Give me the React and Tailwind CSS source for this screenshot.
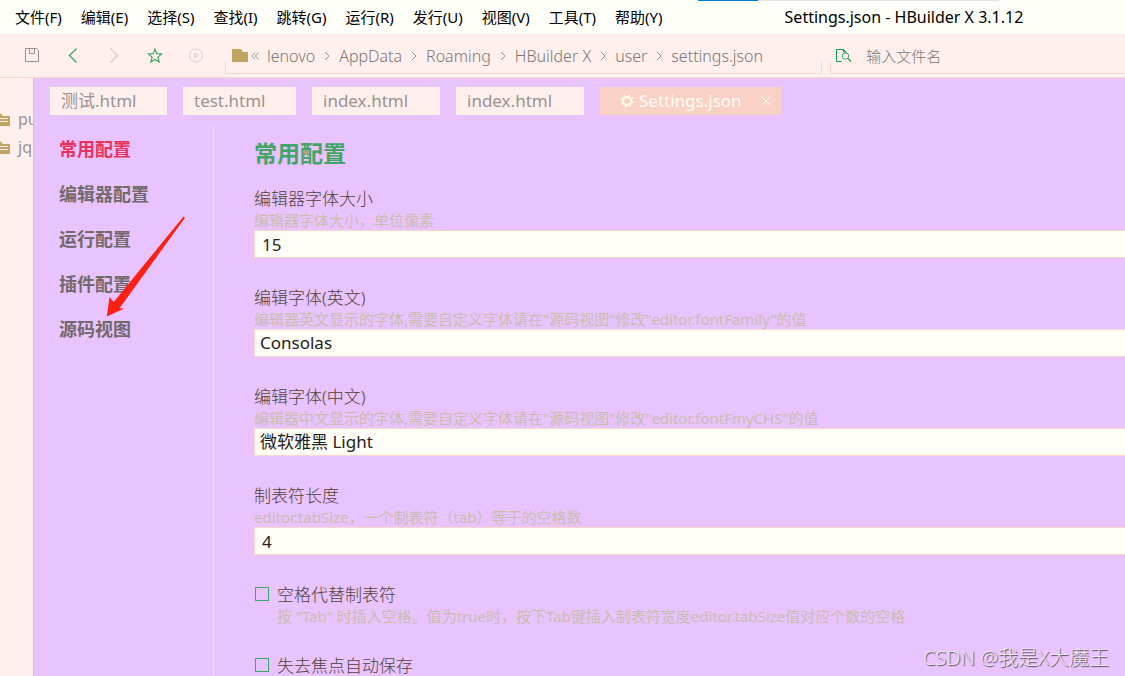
import React from "react";

const menus = ["文件(F)", "编辑(E)", "选择(S)", "查找(I)", "跳转(G)", "运行(R)", "发行(U)", "视图(V)", "工具(T)", "帮助(Y)"];
const crumbs = ["lenovo", "AppData", "Roaming", "HBuilder X", "user", "settings.json"];
const sections = ["常用配置", "编辑器配置", "运行配置", "插件配置", "源码视图"];
const files = [
  { name: "测试.html", width: "w-[117px]" },
  { name: "test.html", width: "w-[113px]" },
  { name: "index.html", width: "w-32" },
  { name: "index.html", width: "w-32" },
];
const fields = [
  { id: "size", label: "编辑器字体大小", hint: "编辑器字体大小，单位像素", value: "15" },
  { id: "latin", label: "编辑字体(英文)", hint: '编辑器英文显示的字体,需要自定义字体请在"源码视图"修改"editor.fontFamily"的值', value: "Consolas", select: true },
  { id: "chinese", label: "编辑字体(中文)", hint: '编辑器中文显示的字体,需要自定义字体请在"源码视图"修改"editor.fontFmyCHS"的值', value: "微软雅黑 Light", select: true },
  { id: "tab", label: "制表符长度", hint: "editor.tabSize，一个制表符（tab）等于的空格数", value: "4" },
];
const checks = [
  { id: "spaces", label: "空格代替制表符", hint: '按 "Tab" 时插入空格。值为true时，按下Tab键插入制表符宽度editor.tabSize值对应个数的空格' },
  { id: "autosave", label: "失去焦点自动保存", hint: "" },
];

function Chevron({ className }) {
  return (
    <svg className={className} width="6" height="10" viewBox="0 0 6 10" fill="none" stroke="currentColor" aria-hidden="true">
      <path d="M1 1l4 4-4 4" />
    </svg>
  );
}

function ToolButton({ label, className, children }) {
  return (
    <button type="button" aria-label={label} className={`flex h-6 w-[41px] items-center justify-center ${className}`}>
      <svg width="16" height="16" viewBox="0 0 16 16" fill="none" stroke="currentColor" aria-hidden="true">
        {children}
      </svg>
    </button>
  );
}

function Toolbar() {
  return (
    <div className="flex h-11 shrink-0 items-stretch border-b border-[#f8d5ca] bg-[#fff0ed] text-[#999391]">
      <div className="flex w-[225px] shrink-0 items-center pl-[11px]">
        <ToolButton label="保存" className="text-[#999391]">
          <path d="M1.500 .5h11l2 2v11h-13zM5.500 .5v5h5v-5" />
        </ToolButton>
        <ToolButton label="后退" className="text-[#3aa762]">
          <path d="M11.500 .5L4.500 7.500l7 7" strokeWidth="1.400" />
        </ToolButton>
        <ToolButton label="前进" className="text-[#d5cdca]">
          <path d="M4.500 .5l7 7-7 7" strokeWidth="1.400" />
        </ToolButton>
        <ToolButton label="收藏" className="text-[#3aa762]">
          <path d="M8 1l1.800 4.600 4.900 .3-3.800 3.200 1.200 4.900L8 11.400 3.900 14l1.200-4.900L1.300 5.900l4.900-.3z" strokeWidth="1.200" />
        </ToolButton>
        <ToolButton label="运行" className="text-[#d5cdca]">
          <circle cx="8" cy="7.500" r="6.500" />
          <path d="M6.500 5.200l3.700 2.300-3.700 2.300z" />
        </ToolButton>
      </div>
      <nav aria-label="路径" className="relative flex min-w-0 flex-[599] items-center pl-[7px]">
        <div className="pointer-events-none absolute inset-x-0 bottom-[3px] h-3 border-x border-b border-[#f8d5ca]" />
        <svg width="16" height="13" viewBox="0 0 16 13" fill="#c0a562" className="shrink-0" aria-hidden="true">
          <path d="M0 0h9l2 3h5v10H0z" />
        </svg>
        <svg width="8" height="8" viewBox="0 0 8 8" fill="none" stroke="currentColor" className="ml-[3px] mr-2 shrink-0" aria-hidden="true">
          <path d="M4 .5L.8 4 4 7.500M7.500 .5L4.300 4l3.200 3.500" />
        </svg>
        {crumbs.map((name, i) => (
          <React.Fragment key={name}>
            {i > 0 && <Chevron className="mx-[9px] shrink-0" />}
            <a href="#" className="whitespace-nowrap text-base font-light leading-6 text-[#7d7572]">{name}</a>
          </React.Fragment>
        ))}
      </nav>
      <div className="relative ml-2 flex flex-[293] items-center pl-1.5">
        <div className="pointer-events-none absolute inset-x-0 bottom-[3px] h-3 border-b border-l border-[#f8d5ca]" />
        <svg width="16" height="15" viewBox="0 0 16 15" fill="none" stroke="#16984b" className="shrink-0" aria-hidden="true">
          <path d="M5.500 13.500h-5v-12h7l2.500 2.500v1M7.500 1.500v2.500h2.500" />
          <circle cx="9.500" cy="8" r="3.200" stroke="#3aa762" />
          <path d="M11.800 10.300l3.400 3.400" stroke="#3aa762" strokeWidth="1.400" />
        </svg>
        <input aria-label="输入文件名" placeholder="输入文件名" className="ml-3.5 w-full min-w-0 bg-transparent text-[15px] font-light leading-6 outline-none placeholder:text-[#7d7572]" />
      </div>
    </div>
  );
}

function ProjectPanel() {
  return (
    <aside className="w-[34px] shrink-0 overflow-hidden border-r border-[#d8c4a8] bg-[#fff0ed] pt-[27px]">
      {["pu", "jq"].map((name) => (
        <div key={name} className="flex h-7 items-center text-base leading-6 text-[#999391]">
          <svg width="10" height="13" viewBox="0 0 10 13" className="mr-2 shrink-0" aria-hidden="true">
            <path d="M0 0l3 3h7v10H0z" fill="#c0a562" />
            <path d="M0 5.500h8M0 8.500h8" stroke="#fff0ed" />
          </svg>
          {name}
        </div>
      ))}
    </aside>
  );
}

function Tabs() {
  return (
    <div role="tablist" className="flex h-12 shrink-0 gap-4 pl-4 pt-[9px]">
      {files.map((f, i) => (
        <button key={i} type="button" role="tab" aria-selected="false" className={`h-7 ${f.width} shrink-0 border border-[#fff3e2] bg-[#fff0ed] pl-2.5 text-left text-[17px] leading-6 text-[#999391]`}>
          {f.name}
        </button>
      ))}
      <div className="flex h-7 w-[181px] shrink-0 items-center justify-between bg-[#f9d1c5] pl-5 pr-2.5 text-[#fffcf5]">
        <button type="button" role="tab" aria-selected="true" className="flex items-center gap-[5px] text-[17px] leading-6">
          <svg width="14" height="14" viewBox="0 0 14 14" fill="none" stroke="#fff8e4" aria-hidden="true">
            <circle cx="7" cy="7" r="4" strokeWidth="2.400" />
            <circle cx="7" cy="7" r="5.500" strokeWidth="1.800" strokeDasharray="2.160 2.160" />
          </svg>
          Settings.json
        </button>
        <button type="button" aria-label="关闭">
          <svg width="10" height="10" viewBox="0 0 10 10" fill="none" stroke="currentColor" aria-hidden="true">
            <path d="M1 1l8 8M9 1L1 9" />
          </svg>
        </button>
      </div>
    </div>
  );
}

const hintStyle = "h-5 whitespace-nowrap text-[15px] leading-5 text-[#c9bdad]";
const labelStyle = "block h-[22px] whitespace-nowrap text-[17px] font-light leading-[22px] text-[#4f4338]";
const boxStyle = "block h-7 w-full appearance-none rounded-none border border-r-0 border-[#fcd6cc] bg-[#fffdf6] text-[17px] leading-6 text-[#222] outline-none";

function Field({ field }) {
  return (
    <div>
      <label htmlFor={field.id} className={labelStyle}>{field.label}</label>
      <p className={hintStyle}>{field.hint}</p>
      {field.select ? (
        <select id={field.id} className={`${boxStyle} pl-[5px]`}>
          <option>{field.value}</option>
        </select>
      ) : (
        <input id={field.id} inputMode="numeric" defaultValue={field.value} className={`${boxStyle} pl-[7px]`} />
      )}
    </div>
  );
}

function CheckField({ field }) {
  return (
    <div className="flex gap-2">
      <input id={field.id} type="checkbox" className="ml-px mt-[3px] size-3.5 shrink-0 appearance-none border border-[#3aa762] checked:bg-[#3aa762]" />
      <div>
        <label htmlFor={field.id} className={labelStyle}>{field.label}</label>
        <p className={hintStyle}>{field.hint}</p>
      </div>
    </div>
  );
}

function Settings() {
  return (
    <div className="relative flex min-h-0 grow">
      <nav aria-label="配置分类" className="w-[180px] shrink-0 border-r border-[#f7dcec] pl-[25px]">
        {sections.map((name, i) => (
          <a key={name} href="#" className={`block h-[45px] text-lg font-bold leading-[46px] ${i === 0 ? "text-[#e8315b]" : "text-[#71696b]"}`}>
            {name}
          </a>
        ))}
      </nav>
      <svg width="80" height="102" viewBox="0 0 80 102" className="pointer-events-none absolute left-[72px] top-[90px]" aria-hidden="true">
        <path d="M77.500 .5L79 1.800 13.500 92.200l4.800 .3L.8 100.500 3.500 81l4.200 5z" fill="#ff2015" />
      </svg>
      <form className="flex min-w-0 grow flex-col gap-[29px] overflow-hidden pl-10">
        <h1 className="h-[33px] shrink-0 text-[23px] font-bold leading-[54px] text-[#3fa668]">常用配置</h1>
        {fields.map((f) => <Field key={f.id} field={f} />)}
        {checks.map((f) => <CheckField key={f.id} field={f} />)}
      </form>
    </div>
  );
}

export default function App() {
  return (
    <div className="relative flex h-screen flex-col overflow-hidden bg-[#e9c3fd] font-['Noto_Sans','Noto_Sans_CJK_SC',sans-serif]">
      <header className="flex h-[34px] shrink-0 items-center bg-[#fffffa] pl-[15px] text-[15px] leading-6 text-black">
        <div role="menubar" className="flex gap-[19px]">
          {menus.map((m) => (
            <button key={m} type="button" role="menuitem" className="whitespace-nowrap">{m}</button>
          ))}
        </div>
        <p className="ml-[122px] whitespace-nowrap text-base">Settings.json - HBuilder X 3.1.12</p>
      </header>
      <div className="absolute left-[698px] top-0 flex h-px w-[301px] bg-[#e3e3e6]">
        <div className="w-[60px] bg-[#0078d7]" />
      </div>
      <Toolbar />
      <div className="flex min-h-0 grow">
        <ProjectPanel />
        <main className="flex min-w-0 grow flex-col">
          <Tabs />
          <Settings />
        </main>
      </div>
      <p className="pointer-events-none absolute bottom-1 right-4 text-[20px] font-light leading-7 text-[#ece6ee] [text-shadow:1px_1px_1px_#55485c]">CSDN @我是X大魔王</p>
    </div>
  );
}
